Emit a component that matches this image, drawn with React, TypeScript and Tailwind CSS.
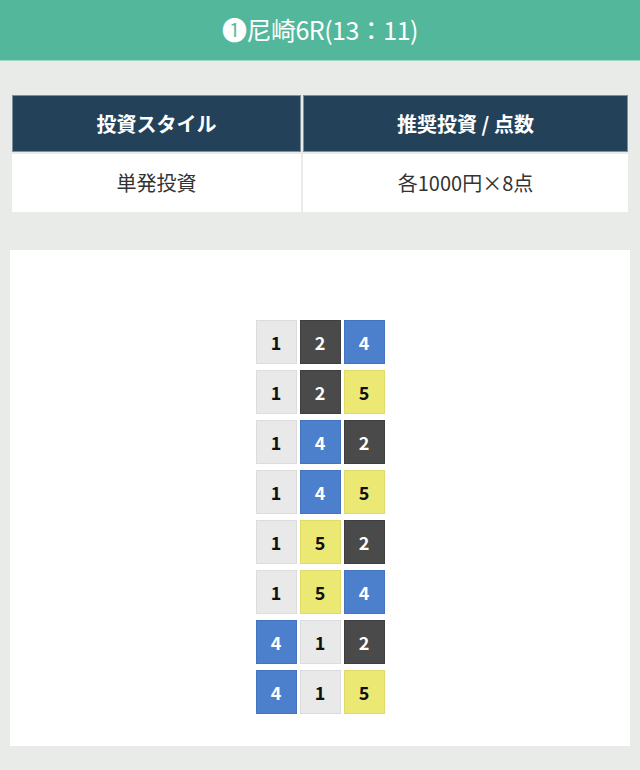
const tileStyle: Record<number, string> = {
  1: "bg-[#e9e9e9] border-[#dcdcdc] text-[#111]",
  2: "bg-[#4a4a4a] border-[#3e3e3e] text-white",
  4: "bg-[#4c80cc] border-[#4474bd] text-white",
  5: "bg-[#ece874] border-[#dedb6a] text-[#111]",
};

const combos: number[][] = [
  [1, 2, 4],
  [1, 2, 5],
  [1, 4, 2],
  [1, 4, 5],
  [1, 5, 2],
  [1, 5, 4],
  [4, 1, 2],
  [4, 1, 5],
];

function Tile({ n }: { n: number }) {
  return (
    <div
      className={`w-[41px] h-[44px] border flex items-center justify-center text-[18px] font-bold ${tileStyle[n]}`}
    >
      {n}
    </div>
  );
}

export default function App() {
  return (
    <div
      className="w-[640px] min-h-[770px] bg-[#e9ebe8]"
      style={{ fontFamily: '"Noto Sans CJK JP", "Noto Sans", sans-serif' }}
    >
      {/* Race title */}
      <div className="h-[61px] bg-[#53b89b] flex items-center justify-center text-white text-[25px] tracking-[-0.5px] border-b border-[#9fd6c4]">
        ❶尼崎6R(13：11)
      </div>

      {/* Investment table */}
      <div className="px-[10px] pt-[32px]">
        <table className="w-full border-separate border-spacing-[2px]">
          <thead>
            <tr>
              <th className="w-[289px] h-[57px] bg-[#234259] border border-[#7d8f9c] text-white text-[20px] font-bold">
                投資スタイル
              </th>
              <th className="h-[57px] bg-[#234259] border border-[#7d8f9c] text-white text-[20px] font-bold">
                推奨投資 / 点数
              </th>
            </tr>
          </thead>
          <tbody>
            <tr>
              <td className="h-[58px] bg-white text-center text-[20px] text-[#333]">単発投資</td>
              <td className="h-[58px] bg-white text-center text-[20px] text-[#333]">各1000円×8点</td>
            </tr>
          </tbody>
        </table>
      </div>

      {/* Combination card */}
      <div className="mx-[10px] mt-[36px] bg-white pt-[70px] pb-[32px] flex justify-center">
        <div className="flex flex-col gap-[6px]">
          {combos.map((row, i) => (
            <div key={i} className="flex gap-[3px]">
              {row.map((n, j) => (
                <Tile key={j} n={n} />
              ))}
            </div>
          ))}
        </div>
      </div>
    </div>
  );
}
